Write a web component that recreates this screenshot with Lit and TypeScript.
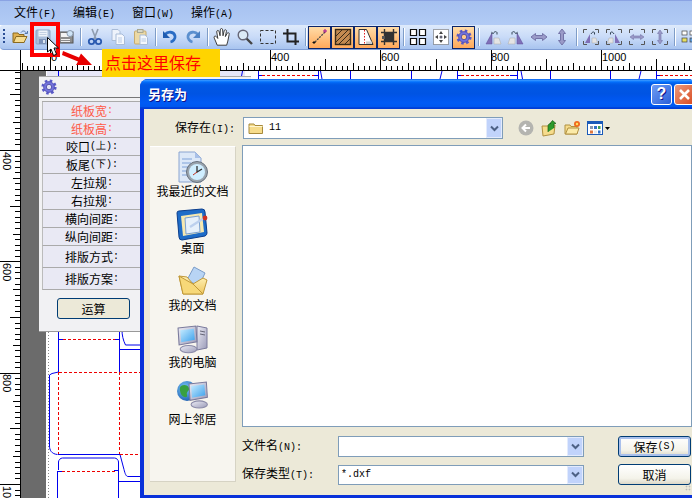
import { LitElement, html, css, svg } from "lit";
import { customElement } from "lit/decorators.js";

const lat = (s: string) => html`<span class="lat">${s}</span>`;

const gear = (bg = false) => svg`
  <g transform="translate(8 8)">
    <circle r="6.3" fill="none" stroke="#5a5ac8" stroke-width="2.6" stroke-dasharray="2.5 2.45"/>
    <circle r="5.4" fill="#7272dc" stroke="#4a4ab0" stroke-width=".8"/>
    <circle r="2.7" fill="${bg ? "#ffc98a" : "#dfe0f5"}" stroke="#3e3e9c" stroke-width=".8"/>
  </g>`;

const hTicks = () => {
  let d = "";
  for (let u = -50; u <= 1200; u += 10) {
    const x = Math.round(49.5 + u * 0.5515) + 0.5;
    if (x < 21) continue;
    const h = u % 200 === 0 ? 20 : u % 100 === 0 ? 11 : u % 50 === 0 ? 7 : 4;
    d += `M${x} 70V${70 - h}`;
  }
  return d;
};
const vTicks = () => {
  let d = "";
  for (let u = -150; u <= 1040; u += 10) {
    const y = Math.round(150 + (u - 400) * 0.5567) + 0.5;
    if (y < 71) continue;
    const w = u % 200 === 0 ? 20 : u % 100 === 0 ? 10 : u % 50 === 0 ? 7 : 5;
    d += `M20 ${y}H${20 - w}`;
  }
  return d;
};

const tb: Record<string, unknown> = {
  open: svg`<path d="M1 4h5l1 1.500h5v8H1z" fill="#e0b050" stroke="#8a6a20"/><path d="M1.500 13.500 4 7.500h11l-3 6z" fill="#f6dc90" stroke="#8a6a20"/><path d="M9 3.500c1.500-2 3.500-2 5 0l-1 1h2.500V2" fill="none" stroke="#5577aa" stroke-width="1"/>`,
  save: svg`<rect x="1" y="1" width="14" height="14" rx="1" fill="#a9bdd9" stroke="#8ea3c2"/><rect x="3.500" y="1.500" width="9" height="6" fill="#eef3f9"/><path d="M4.500 3.500h7M4.500 5.500h7" stroke="#c3d0e2"/><rect x="4" y="10" width="7" height="5" fill="#7d93b8"/><rect x="8" y="11" width="2" height="3" fill="#dbe4f0"/>`,
  saveas: svg`<rect x="1" y="3" width="14" height="11" fill="#8c8c8c" stroke="#555"/><rect x="3" y="4" width="8" height="4" fill="#f2f2f2"/><rect x="3" y="10" width="9" height="1" fill="#eee"/><rect x="3" y="12" width="9" height="1" fill="#eee"/><circle cx="12" cy="4.500" r="3" fill="#cfe4f6" stroke="#8c9cb0"/>`,
  cut: svg`<path d="M5 0l4 10M11 0 7 10" stroke="#8f9db0" stroke-width="1.600" fill="none"/><circle cx="4.500" cy="12.500" r="2.700" fill="none" stroke="#2a5ab0" stroke-width="1.800"/><circle cx="11.500" cy="12.500" r="2.700" fill="none" stroke="#2a5ab0" stroke-width="1.800"/>`,
  copy: svg`<path d="M2 .5h6l2 2v9H2z" fill="#eef3fb" stroke="#a9bcd8"/><path d="M6 5h6l2.500 2.500V15.500H6z" fill="#f5f8fd" stroke="#a9bcd8"/><path d="M8 9h4M8 11h4M8 13h4" stroke="#b9cbe5"/>`,
  paste: svg`<rect x="1.500" y="2" width="11.500" height="13" rx="1" fill="#ecd9a4" stroke="#c6ab70"/><rect x="4.500" y=".5" width="5.500" height="3" fill="#d8d8c8" stroke="#a8a890"/><path d="M7 6h5l2.500 2.500v7H7z" fill="#f4f8fd" stroke="#a9bcd8"/><path d="M8.500 10h4.500M8.500 12h4.500" stroke="#b9cbe5"/>`,
  undo: svg`<path d="M3 5.500c3-3.500 9-3 10 1.500 .6 3-2 5.500-4.500 6" fill="none" stroke="#2a6cc4" stroke-width="2.800"/><path d="M1 2v7h7z" fill="#1f5cb0"/>`,
  redo: svg`<path d="M13 5.500c-3-3.500-9-3-10 1.500-.6 3 2 5.500 4.500 6" fill="none" stroke="#5c90cf" stroke-width="2.800"/><path d="M15 2v7H8z" fill="#4a80c4"/>`,
  hand: svg`<g transform="translate(-1.500 -1.500) scale(1.180)"><path d="M4 15 1.500 9c-.8-1.500 1-2.400 2-1l1 1.300L3.600 3.800c-.2-1.500 1.700-1.800 2-.3l.8 3.500.2-5c0-1.500 2-1.500 2 0l.3 5 1-4.200c.4-1.400 2.200-1 1.900.4l-.9 4.500 1.500-2.700c.7-1.200 2.300-.4 1.700 1L13 11.500 12 15z" fill="#fff" stroke="#333" stroke-width=".8"/></g>`,
  zoom: svg`<path d="M9.500 9.500 15 15" stroke="#444" stroke-width="2.400"/><circle cx="6" cy="6" r="4.800" fill="#dceaf6" stroke="#667" stroke-width="1.400"/>`,
  marq: svg`<rect x=".5" y="1.500" width="15" height="13" fill="none" stroke="#333" stroke-dasharray="3 2"/>`,
  crop: svg`<path d="M4.500 0v12.500H16M0 4.500h12.500V16" fill="none" stroke="#222" stroke-width="2"/>`,
  line: svg`<path d="M3 13 13 3" stroke="#444" stroke-width="1.300" stroke-dasharray="2 1"/><path d="M13 0v4M11 2h4" stroke="#a01090"/><path d="M2 12v3M.5 13.500h3" stroke="#111"/>`,
  hatch: svg`<rect x=".5" y=".5" width="15" height="15" fill="#c48a50" stroke="#3a2a18" stroke-width="1.400"/><path d="M1 7 7 1M1 13 13 1M4 15 15 4M10 15l5-5" stroke="#3a2a18"/>`,
  trap: svg`<path d="M1 .5h7.500L15 15.500H1z" fill="#fff" stroke="#333"/><path d="M6.500 1v14" stroke="#e02020" stroke-dasharray="1.500 1.500"/><rect x="8" y="12.500" width="6" height="2.500" fill="#ccc"/>`,
  cross: svg`<rect x="4" y="4" width="8" height="8" fill="#333"/><path d="M3.500 0v16M12.500 0v16M0 3.500h16M0 12.500h16" stroke="#333" stroke-width="1.400"/><rect x="1" y="7" width="3" height="3" fill="#555"/>`,
  grid: svg`<path d="M1.500 1.500h6v6h-6zM10.500 1.500h6v6h-6zM1.500 10.500h6v6h-6zM10.500 10.500h6v6h-6z" fill="#fff" stroke="#111" stroke-width="1.200" transform="translate(-1 -1)"/>`,
  fit: svg`<rect x=".5" y=".5" width="15" height="15" fill="#fff" stroke="#555" stroke-dasharray="1 1"/><path d="M8 2l2 3H6zM8 14l2-3H6zM2 8l3-2v4zM14 8l-3-2v4z" fill="#444"/><circle cx="8" cy="8" r="1.500" fill="#667"/>`,
  gear: gear(true),
  fl: svg`<path d="M7 4v11H1z" fill="#8070b8" stroke="#5c4c98" stroke-width=".5"/><path d="M9 9h5l2 6H9z" fill="#e4e4e4" stroke="#aaa" stroke-width=".5"/><path d="M8 5c1-2.500 3-3 4-1.500v2" fill="none" stroke="#345" stroke-width="1"/><path d="M8 4 6.500 2.500V5.500z" fill="#345"/>`,
  fr: svg`<path d="M9 4v11h6z" fill="#8070b8" stroke="#5c4c98" stroke-width=".5"/><path d="M7 9H2L0 15h7z" fill="#e4e4e4" stroke="#aaa" stroke-width=".5"/><path d="M8 5C7 2.500 5 2 4 3.500v2" fill="none" stroke="#345" stroke-width="1"/><path d="M8 4l1.500-1.500V5.500z" fill="#345"/>`,
  ah: svg`<path d="M0 8 4.500 4.500V6.500h7V4.500L16 8l-4.500 3.500V9.500h-7v2z" fill="#9a9ac8" stroke="#7474a8"/>`,
  av: svg`<path d="M8 0 11.500 4.500H9.500v7h2L8 16l-3.500-4.500h2v-7h-2z" fill="#9a9ac8" stroke="#7474a8"/>`,
  dfl: svg`<path d="M.5 4V.5H4M12 .5h3.500V4M.5 12v3.500H4M12 15.500h3.500V12" fill="none" stroke="#555"/><path d="M7 5v9H2z" fill="#8070b8"/><path d="M9 9h4l1.500 5H9z" fill="#e4e4e4" stroke="#aaa" stroke-width=".5"/><path d="M8 5c1-2 2.500-2.500 3.500-1.500v2" fill="none" stroke="#345"/>`,
  dfr: svg`<path d="M.5 4V.5H4M12 .5h3.500V4M.5 12v3.500H4M12 15.500h3.500V12" fill="none" stroke="#555"/><path d="M9 5v9h5z" fill="#8070b8"/><path d="M7 9H3L1.500 14H7z" fill="#e4e4e4" stroke="#aaa" stroke-width=".5"/><path d="M8 5C7 3 5.500 2.500 4.500 3.500v2" fill="none" stroke="#345"/>`,
  dah: svg`<path d="M.5 4V.5H4M12 .5h3.500V4M.5 12v3.500H4M12 15.500h3.500V12" fill="none" stroke="#555"/><path d="M1 8 4.500 5.500V7h7V5.500L15 8l-3.500 2.500V9h-7v1.500z" fill="#9a9ac8" stroke="#7474a8" stroke-width=".6"/>`,
  dav: svg`<path d="M.5 4V.5H4M12 .5h3.500V4M.5 12v3.500H4M12 15.500h3.500V12" fill="none" stroke="#555"/><path d="M8 1l2.500 3.500H9v7h1.500L8 15l-2.500-3.500H7v-7H5.500z" fill="#9a9ac8" stroke="#7474a8" stroke-width=".6"/>`,
  grid2: svg`<rect x="1" y="2" width="5" height="4" fill="#fff" stroke="#444" stroke-width=".7"/><rect x="9" y="2" width="5" height="4" fill="#fff" stroke="#444" stroke-width=".7"/><rect x="1" y="9" width="5" height="4" fill="#e8e060" stroke="#444" stroke-width=".7"/><rect x="9" y="9" width="5" height="4" fill="#60a0e0" stroke="#444" stroke-width=".7"/>`,
};

const groups: [string, boolean?][][] = [
  [["open"], ["save"], ["saveas"]],
  [["cut"], ["copy"], ["paste"]],
  [["undo"], ["redo"]],
  [["hand"], ["zoom"], ["marq"], ["crop"]],
  [["line", true], ["hatch", true], ["trap", true], ["cross", true]],
  [["grid"], ["fit"], ["gear", true]],
  [["fl"], ["fr"], ["ah"], ["av"]],
  [["dfl"], ["dfr"], ["dah"], ["dav"]],
  [["grid2"]],
];

const panelRows: [string, string, string?][] = [
  ["纸板宽", ":", "req"],
  ["纸板高", ":", "req"],
  ["咬口", "(上):"],
  ["板尾", "(下):"],
  ["左拉规", ":"],
  ["右拉规", ":"],
  ["横向间距", ":"],
  ["纵向间距", ":"],
  ["排版方式", ":", "tall"],
  ["排版方案", ":", "tall"],
];

const folderDefs = svg`<defs>
  <linearGradient id="scr" x1="0" y1="0" x2="1" y2="1"><stop offset="0" stop-color="#c8ecff"/><stop offset="1" stop-color="#3aa0ec"/></linearGradient>
  <linearGradient id="fold" x1="0" y1="0" x2="0" y2="1"><stop offset="0" stop-color="#fff2b8"/><stop offset="1" stop-color="#f0c860"/></linearGradient>
  <linearGradient id="gry" x1="0" y1="0" x2="1" y2="1"><stop offset="0" stop-color="#eeeef6"/><stop offset="1" stop-color="#9a9ab8"/></linearGradient>
  <radialGradient id="glb" cx=".4" cy=".35" r=".8"><stop offset="0" stop-color="#7cc8f8"/><stop offset="1" stop-color="#1050a8"/></radialGradient>
</defs>`;

const monitor = (x: number, y: number, s = 1) => svg`
  <g transform="translate(${x} ${y}) scale(${s})">
    <path d="M1 2 18 0 19 15 2 18z" fill="url(#gry)" stroke="#7a7a9c"/>
    <path d="M3 4 16 2.500 17 13 4 15.500z" fill="url(#scr)"/>
    <ellipse cx="11" cy="22" rx="8" ry="3.500" fill="url(#gry)" stroke="#8a8aa8"/>
  </g>`;

const sideIcons = [
  svg`<path d="M2 0h16l6 6v24H2z" fill="#dce8f8" stroke="#8aa4d0"/><path d="M18 0v6h6z" fill="#a8c0e8"/><path d="M5 7h10M5 11h9M5 15h7M5 19h7M5 23h7" stroke="#7ea2d8"/>
    <circle cx="20" cy="20" r="10.500" fill="#9aa4ae" stroke="#66707c"/><circle cx="20" cy="20" r="8" fill="#cfeeff"/><path d="M20 14v6l5-3" fill="none" stroke="#333" stroke-width="1.300"/><path d="M20 20l-4 3" stroke="#c03020"/>`,
  svg`<path d="M0 4Q0 2 2 2L25 0Q28 0 28 3L30 24Q30 26 28 27L5 31Q2 31 2 28z" fill="#1e6cc8" stroke="#0b3d8c"/><path d="M4 7 25 4 27 23 6 27z" fill="#f6e8b0"/><path d="M8 9 22 7 23 23 9 25z" fill="#e6f0fb" stroke="#7aa0d0"/><path d="M13 18 27 9" stroke="#bcd0ee" stroke-width="2.400"/><circle cx="28" cy="9" r="2.400" fill="#d03020"/>`,
  svg`<path d="M10 14 17 1l11 6-6 13z" fill="#b8d4f4" stroke="#7a9cc8"/><path d="M2 10l8 1 6 7 10-6 4 2-4 14H6z" fill="url(#fold)" stroke="#c09838"/><path d="M2 10l4 18h20L16 18z" fill="#f7d878" stroke="#c09838"/>`,
  svg`<path d="M20 3l10 2v20l-10 2z" fill="url(#gry)" stroke="#7a7a9c"/><path d="M23 8l5 1M23 11l5 1" stroke="#667"/>${monitor(0, 3, 1.05)}`,
  svg`<circle cx="10" cy="11" r="10" fill="url(#glb)"/><path d="M4 6c3-2 7-1 8 2s-3 3-2 7-5 2-6-1-2-6 0-8z" fill="#38a040"/>${monitor(11, 2, 1.02)}`,
];
const sideLabels = ["我最近的文档", "桌面", "我的文档", "我的电脑", "网上邻居"];

@customElement("app-root")
export class AppRoot extends LitElement {
  static styles = css`
    :host { display: block; width: 692px; height: 498px; overflow: hidden; position: relative; font-family: "Noto Sans CJK SC", sans-serif; font-size: 12px; line-height: 14px; color: #000; background: #fff; }
    .lat { font-family: "Liberation Mono", monospace; font-size: 10px; }
    .app { display: flex; flex-direction: column; width: 692px; height: 498px; }
    .menu { height: 25px; box-sizing: border-box; flex: none; display: flex; gap: 17px; align-items: center; padding: 1px 0 0 14px; background: linear-gradient(#a6c1f0, #b2cbf5); border-top: 1px solid #8aa3e3; }
    .toolbar { height: 25px; flex: none; box-sizing: border-box; display: flex; align-items: center; padding-left: 8px; background: linear-gradient(#deeafb, #c9dbf8 50%, #a8c4ef); border-bottom: 1px solid #7f9dd4; border-radius: 3px 0 0 4px; position: relative; }
    .grip { position: absolute; left: 3px; top: 4px; width: 2px; height: 16px; background: repeating-linear-gradient(#2b4f96 0 2px, transparent 2px 4px); }
    .btn { width: 23px; height: 23px; display: flex; align-items: center; justify-content: center; flex: none; box-sizing: border-box; }
    .btn svg { width: 16px; height: 16px; overflow: visible; }
    .btn.on { background: linear-gradient(#ffdca8, #ffa95a); border: 1px solid #0a246a; }
    .sep { width: 6px; flex: none; height: 18px; display: flex; justify-content: center; }
    .sep::before { content: ""; width: 1px; background: #7f9dc8; box-shadow: 1px 0 0 #fff; }
    .work { flex: 1; position: relative; }
    .canvas { position: absolute; inset: 0; width: 692px; height: 448px; display: block; }
    .panel { position: absolute; left: 39px; top: 26px; width: 212px; height: 256px; box-sizing: border-box; background: #f1f1f3; border-bottom: 1px solid #999; border-top: 1px solid #aaa; }
    .ptitle { height: 20px; display: flex; align-items: center; padding-left: 2px; border-bottom: 1px solid #777; box-sizing: content-box; }
    .ptitle svg { width: 16px; height: 16px; overflow: visible; }
    .rows { margin: 3px 0 0 3px; width: 100%; display: flex; flex-direction: column; border-top: 1px solid #aaa; }
    .row { height: 17px; width: 98px; display: flex; align-items: center; justify-content: center; background: #e9e9f4; border-bottom: 1px solid #aaa; border-left: 1px solid #bbb; white-space: nowrap; box-sizing: content-box; }
    .row.tall { height: 21px; }
    .row.req { color: #ff5a48; }
    .calc { margin: 8px 0 0 18px; width: 73px; height: 21px; box-sizing: border-box; border: 1px solid #003c74; border-radius: 3px; background: #ece9d8; display: flex; align-items: center; justify-content: center; }
    .dialog { position: absolute; left: 140px; top: 29px; width: 556px; height: 419px; box-sizing: border-box; display: flex; flex-direction: column; border-radius: 8px 8px 0 0; background: #0831d9; padding: 0 0 3px 4px; }
    .dtitle { height: 30px; flex: none; margin-left: -4px; display: flex; align-items: center; padding: 0 1px 0 8px; border-radius: 8px 8px 0 0; background: linear-gradient(#0058ee 0, #3593ff 4%, #288eff 6%, #127dff 8%, #036ffc 10%, #0262ee 14%, #0057e5 20%, #0054e3 50%, #0055eb 60%, #005bf5 80%, #0058ee 92%, #003dd7 96%, #003dd7); color: #fff; font-size: 13px; font-weight: 700; text-shadow: 1px 1px 0 #0f1089; justify-content: space-between; }
    .wb { display: flex; gap: 2px; }
    .wb div { width: 21px; height: 21px; box-sizing: border-box; border: 1px solid #fff; border-radius: 3px; display: flex; align-items: center; justify-content: center; color: #fff; }
    .help { background: linear-gradient(135deg, #6f9cf4, #2a5fd8); font: 700 16px "Liberation Sans", sans-serif; }
    .close { background: linear-gradient(135deg, #eb9a7c, #d8491f); }
    .close svg { width: 13px; height: 13px; }
    .dbody { flex: 1; background: #ece9d8; padding-top: 8px; display: flex; flex-direction: column; }
    .lookin { height: 22px; display: flex; align-items: center; padding-left: 31px; flex: none; }
    .lookin .lbl { width: 68px; white-space: nowrap; }
    .combo { box-sizing: border-box; border: 1px solid #7f9db9; background: #fff; display: flex; align-items: center; justify-content: space-between; padding-left: 2px; flex: none; }
    .combo .name { display: flex; align-items: center; gap: 5px; padding-left: 2px; }
    .combo .arr { width: 16px; align-self: stretch; margin: 0; background: #c1d3fb; border: 1px solid #e3ebfd; box-sizing: border-box; display: flex; align-items: center; justify-content: center; }
    .combo .arr svg { width: 9px; height: 7px; }
    .combo.top { width: 260px; height: 22px; }
    .nav { display: flex; gap: 7px; margin-left: 15px; align-items: center; }
    .nav .ic { width: 16px; height: 16px; overflow: visible; }
    .nav .v { display: flex; align-items: center; gap: 2px; }
    .nav .m { width: 5px; height: 3px; }
    .mid { display: flex; margin-top: 6px; flex: 1; }
    .side { margin: 1px 0 0 6px; width: 86px; height: 336px; box-sizing: border-box; background: #f7f5ef; border-right: 1px solid #d6d3c4; border-bottom: 1px solid #d6d3c4; border-top: 1px solid #fff; padding-top: 5px; display: flex; flex-direction: column; }
    .defs { position: absolute; width: 0; height: 0; }
    .si { height: 57px; display: flex; flex-direction: column; align-items: center; flex: none; white-space: nowrap; }
    .si svg { width: 32px; height: 32px; overflow: visible; flex: none; }
    .main { margin-left: 6px; width: 450px; display: flex; flex-direction: column; }
    .list { height: 282px; box-sizing: border-box; background: #fff; border: 1px solid #7f9db9; }
    .frow { display: flex; align-items: center; margin-top: 7px; }
    .frow.first { margin-top: 9px; }
    .frow .lbl { width: 96px; white-space: nowrap; }
    .combo.f { width: 246px; height: 21px; }
    .combo.f2 { height: 20px; font-family: "Liberation Mono", monospace; font-size: 10px; }
    .dbtn { margin-left: 34px; width: 73px; height: 21px; box-sizing: border-box; border: 1px solid #003c74; border-radius: 3px; background: linear-gradient(#fff, #f4f3ea 70%, #dcd8c8); display: flex; align-items: center; justify-content: center; white-space: nowrap; }
    .dbtn.def { box-shadow: inset 0 0 0 2px #a9c0ec; }
    .grip2 { position: absolute; right: 1px; bottom: 7px; width: 6px; height: 6px; background: radial-gradient(#bbb 40%, transparent 50%) 0 0 / 3px 3px; }
    .hl { position: absolute; left: 30px; top: 22px; width: 30px; height: 35px; box-sizing: border-box; border: 4px solid #ff0000; }
    .cursor { position: absolute; left: 47px; top: 37px; width: 12px; height: 20px; overflow: visible; }
    .arrow { position: absolute; left: 60px; top: 48px; width: 36px; height: 20px; overflow: visible; }
    .callout { position: absolute; left: 102px; top: 49px; width: 118px; height: 28px; background: #ffd400; color: #ff0000; font-size: 16px; line-height: 26px; padding-left: 3px; box-sizing: border-box; white-space: nowrap; }
  `;

  private chevron() {
    return svg`<path d="M1 1.500 4.500 5 8 1.500" fill="none" stroke="#4d6185" stroke-width="2"/>`;
  }

  private rulers() {
    const hl: [number, number][] = [[400, 270], [600, 380], [800, 490], [1000, 601]];
    const vl: [number, number][] = [[400, 152], [600, 263], [800, 374], [1000, 486]];
    return svg`
      <g transform="translate(0 -50)">
        <rect x="21" y="71" width="25" height="427" fill="#6b6b6b"/>
        <path d="M48.500 71V498" stroke="#888" stroke-dasharray="1 2"/>
        <rect x="47" y="71" width="198" height="5" fill="#e7e7f7"/>
        <g fill="none" stroke="#0000ee" stroke-width="1" shape-rendering="crispEdges">
          <path d="M58.500 71v8M258.500 71v8M350.500 71v8M411.500 71v8M457.500 71v8M517.500 71v8M550.500 71v8M610.500 71v8M656.500 71v8M318.500 71v8"/>
          <path d="M258.500 75.500h4M457.500 75.500h4M510 75.500h7M656.500 75.500h4M314 75.500h4"/>
          <path d="M58.500 330V372M119.500 330V372M119.500 349.500H141M58 339.500h5M115 339.500h4"/>
          <path d="M57.500 471V498M118.500 470V498M119 481.500H141M58 454.500H120M57.500 471h5M114 470.500h4"/>
        </g>
        <g fill="none" stroke="#0000ee" stroke-width="1">
          <path d="M241 79l1.500-8M322 79l-1.500-8M440 79l2-8M522.500 79l-1.500-8M639 79l2-8"/>
          <path d="M122 330c0 5 1 10 3.500 15H141"/>
          <path d="M58.500 372 52 373.500 49.500 375V446c0 4 2 8 8 8.500"/>
          <path d="M58.500 470v-8c0-2 2-4 4-4h52c2 0 4 2 4 4v8"/>
          <path d="M120 454.500l4 15c1 4 2 7 4 7H141"/>
        </g>
        <g fill="none" stroke="#ee0000" stroke-dasharray="3 2" shape-rendering="crispEdges">
          <path d="M262 75.500H314M461 75.500H510M660 75.500H692"/>
          <path d="M63 339.500H115M58.500 372.500H141M58.500 372V454M119.500 372V454M120 454.500H141M62 471.500H115"/>
        </g>
        <path d="${hTicks()}" stroke="#000" shape-rendering="crispEdges"/>
        <path d="${vTicks()}" stroke="#000" shape-rendering="crispEdges"/>
        <path d="M0 70.500H692M20.500 50V498" stroke="#000" shape-rendering="crispEdges"/>
        <g font-family="Liberation Sans, sans-serif" font-size="11" fill="#000">
          <text x="51" y="61">0</text>
          ${hl.map(([v, x]) => svg`<text x="${x + 1}" y="61">${v}</text>`)}
          ${vl.map(([v, y]) => svg`<text transform="translate(2.500 ${y}) rotate(90)">${v}</text>`)}
        </g>
      </g>`;
  }

  render() {
    return html`
      <div class="app">
        <div class="menu">
          <span>文件${lat("(F)")}</span><span>编辑${lat("(E)")}</span><span>窗口${lat("(W)")}</span><span>操作${lat("(A)")}</span>
        </div>
        <div class="toolbar">
          <div class="grip"></div>
          ${groups.map((g, i) => html`${i ? html`<div class="sep"></div>` : ""}${g.map(([n, on]) => html`<div class="btn ${on ? "on" : ""}"><svg viewBox="0 0 16 16">${tb[n]}</svg></div>`)}`)}
        </div>
        <div class="work">
          <svg class="canvas" viewBox="0 0 692 448">${this.rulers()}</svg>
          <div class="panel">
            <div class="ptitle"><svg viewBox="0 0 16 16">${gear()}</svg></div>
            <div class="rows">
              ${panelRows.map(([a, b, c]) => html`<div class="row ${c ?? ""}">${a}${lat(b)}</div>`)}
            </div>
            <div class="calc">运算</div>
          </div>
          <div class="dialog">
            <div class="dtitle">
              <span>另存为</span>
              <div class="wb">
                <div class="help">?</div>
                <div class="close"><svg viewBox="0 0 13 13"><path d="M2 2 11 11M11 2 2 11" stroke="#fff" stroke-width="2.600"/></svg></div>
              </div>
            </div>
            <div class="dbody">
              <div class="lookin">
                <span class="lbl">保存在${lat("(I):")}</span>
                <div class="combo top">
                  <span class="name"><svg width="16" height="14" viewBox="0 0 16 14"><path d="M1 3h5l1 1.500h7.500v8H1z" fill="#f6dc8c" stroke="#a88a3c"/><path d="M1.500 5.500h13" stroke="#fff6d0"/></svg>${lat("11")}</span>
                  <span class="arr"><svg viewBox="0 0 9 7">${this.chevron()}</svg></span>
                </div>
                <div class="nav">
                  <svg class="ic" viewBox="0 0 16 16"><circle cx="8" cy="8" r="7.500" fill="#b4b4b0"/><path d="M12 8H5M8 4.500 4.500 8 8 11.500" fill="none" stroke="#fff" stroke-width="2"/></svg>
                  <svg class="ic" viewBox="0 0 16 16"><path d="M1 6h5l8-1-1 9-11 2z" fill="#f6dc8c" stroke="#b09040"/><path d="M7 12V6.500c0-2 1-3 3-3H9L11.500.5 15 3.500h-2V8" fill="#2c9a2c" stroke="#186018" stroke-width=".7"/></svg>
                  <svg class="ic" viewBox="0 0 16 16"><path d="M1 5h5l1 1.500h6V14H1z" fill="#f6dc8c" stroke="#b09040"/><path d="M1.500 14 4 8h11l-2 6z" fill="#fbeaa8" stroke="#b09040"/><circle cx="13" cy="4" r="3" fill="#f06a20"/><circle cx="13" cy="4" r="1.200" fill="#ffe060"/></svg>
                  <span class="v"><svg class="ic" viewBox="0 0 16 16"><rect x=".5" y="1.500" width="15" height="13" fill="#fff" stroke="#1a5ab8"/><rect x="1" y="2" width="14" height="2" fill="#1a5ab8"/><rect x="3" y="6" width="3" height="3" fill="#8a98b0"/><rect x="7" y="6" width="3" height="3" fill="#3070c8"/><rect x="11" y="6" width="2.500" height="3" fill="#40a050"/><rect x="3" y="10.500" width="3" height="3" fill="#e07840"/><rect x="7" y="10.500" width="3" height="3" fill="#e8e8e8"/><rect x="11" y="10.500" width="2.500" height="3" fill="#3070c8"/></svg><svg class="m" viewBox="0 0 5 3"><path d="M0 0h5L2.500 3z" fill="#000"/></svg></span>
                </div>
              </div>
              <div class="mid">
                <div class="side">
                  <svg class="defs">${folderDefs}</svg>
                  ${sideLabels.map((l, i) => html`<div class="si"><svg viewBox="0 0 32 32">${sideIcons[i]}</svg><span>${l}</span></div>`)}
                </div>
                <div class="main">
                  <div class="list"></div>
                  <div class="frow first">
                    <span class="lbl">文件名${lat("(N):")}</span>
                    <div class="combo f"><span></span><span class="arr"><svg viewBox="0 0 9 7">${this.chevron()}</svg></span></div>
                    <div class="dbtn def">保存${lat("(S)")}</div>
                  </div>
                  <div class="frow">
                    <span class="lbl">保存类型${lat("(T):")}</span>
                    <div class="combo f f2"><span>*.dxf</span><span class="arr"><svg viewBox="0 0 9 7">${this.chevron()}</svg></span></div>
                    <div class="dbtn">取消</div>
                  </div>
                </div>
              </div>
            </div>
          </div>
        </div>
      </div>
      <div class="grip2"></div>
      <div class="hl"></div>
      <svg class="arrow" viewBox="0 0 36 20"><path d="M3 3 19 9.500 21 5.500 32 17 16 17 18 13.500 2 7z" fill="#e80000"/></svg>
      <svg class="cursor" viewBox="0 0 12 20"><path d="M.5.500V15L4 12l2.500 6.500 3-1.200L7 11h4.500z" fill="#fff" stroke="#000"/></svg>
      <div class="callout">点击这里保存</div>
    `;
  }
}
